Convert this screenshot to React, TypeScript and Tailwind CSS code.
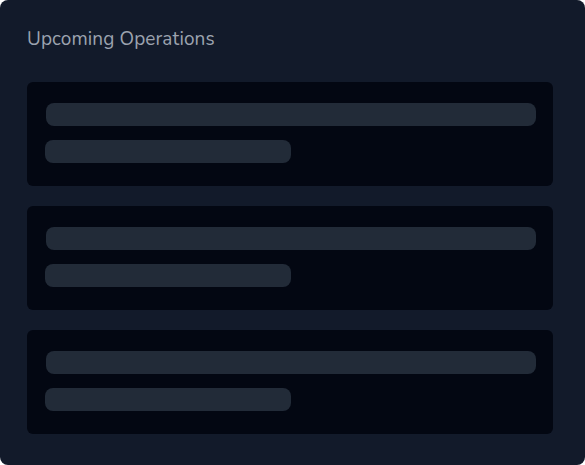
export default function App() {
  const items = [0, 1, 2];

  return (
    <div className="h-[465px] w-[585px] overflow-hidden rounded-lg bg-[#121a2a] pl-[27px] pr-[32px] pt-[25px] font-['Nunito','Lato',sans-serif]">
      <h2 className="text-[19px] leading-7 font-normal tracking-[0.1px] text-[#9ca3af]">
        Upcoming Operations
      </h2>
      <div className="mt-[29px] flex flex-col gap-5">
        {items.map((i) => (
          <div
            key={i}
            className="flex h-[104px] flex-col rounded-md bg-[#030712] pl-[18px] pr-[17px] pt-[21px]"
          >
            <div className="ml-px h-[23px] rounded-lg bg-[#222b38]" />
            <div className="mt-[14px] h-[23px] w-[246px] rounded-lg bg-[#222b38]" />
          </div>
        ))}
      </div>
    </div>
  );
}
